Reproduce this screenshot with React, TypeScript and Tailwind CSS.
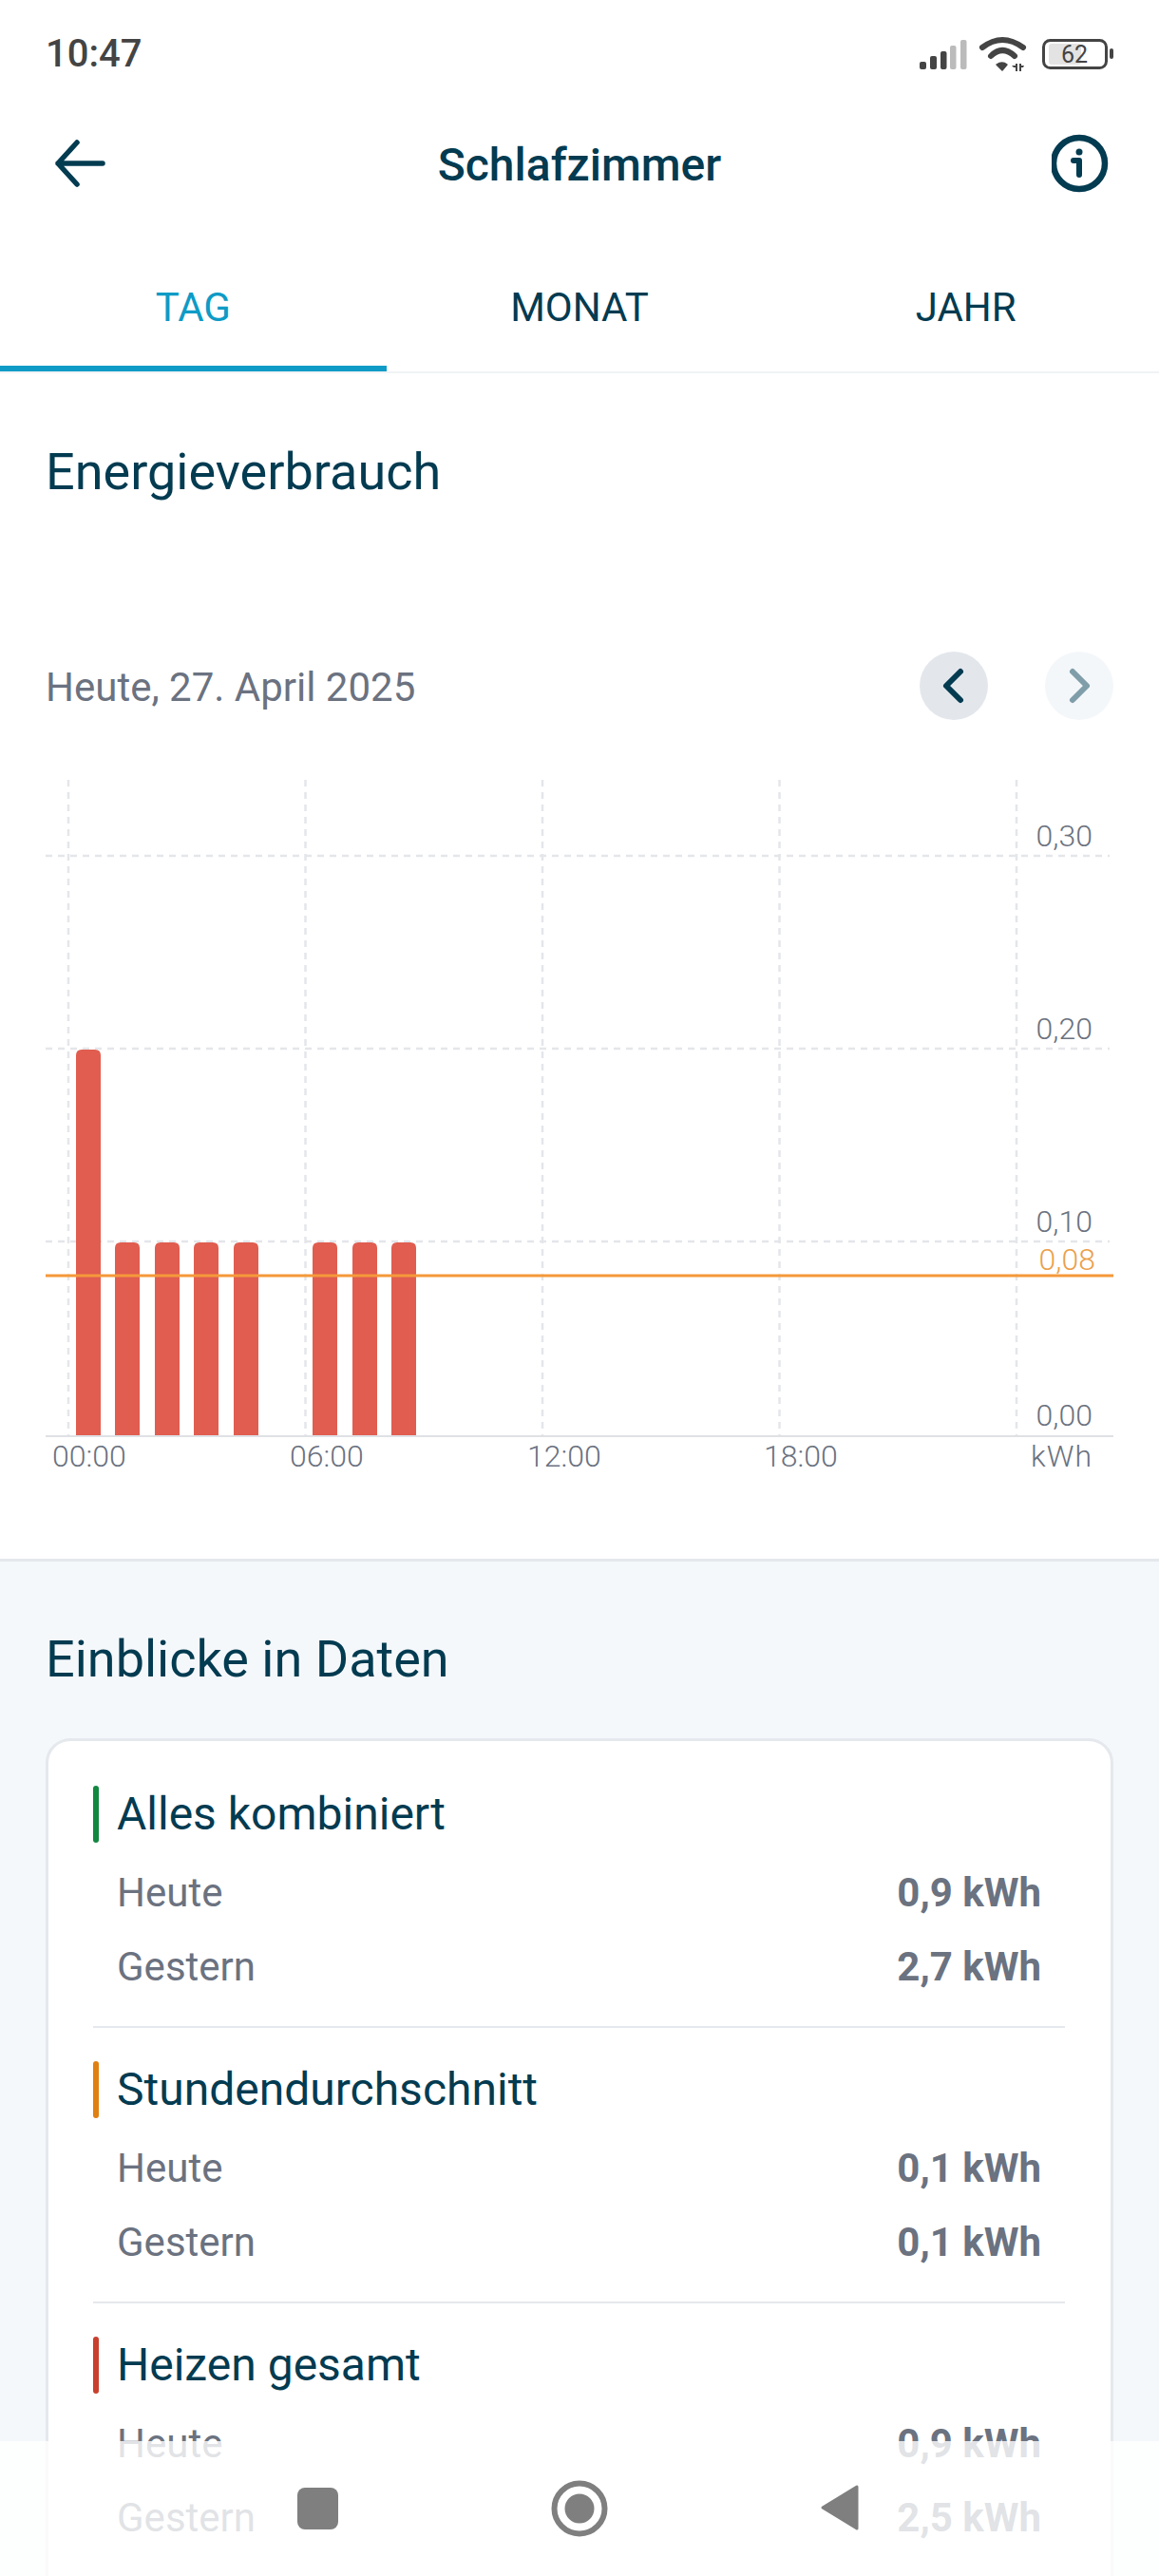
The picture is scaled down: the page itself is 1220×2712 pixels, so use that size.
const DARK = "#033b51";

const bars = [
  { x: 80, value: 0.2 },
  { x: 121, value: 0.1 },
  { x: 163, value: 0.1 },
  { x: 204, value: 0.1 },
  { x: 246, value: 0.1 },
  { x: 329, value: 0.1 },
  { x: 371, value: 0.1 },
  { x: 412, value: 0.1 },
];

const insights = [
  { title: "Alles kombiniert", bar: "bg-[#12873f]", today: "0,9 kWh", yesterday: "2,7 kWh" },
  { title: "Stundendurchschnitt", bar: "bg-[#e07f12]", today: "0,1 kWh", yesterday: "0,1 kWh" },
  { title: "Heizen gesamt", bar: "bg-[#c9402f]", today: "0,9 kWh", yesterday: "2,5 kWh" },
];

function StatusIcons() {
  return (
    <svg width="220" height="50" viewBox="960 30 220 50" className="block">
      <rect x="968" y="63" width="7" height="8" rx="2" fill="#444" />
      <rect x="979" y="57" width="7" height="14" rx="2" fill="#444" />
      <rect x="990" y="52" width="6.5" height="19" rx="2" fill="#444" />
      <rect x="1000" y="46" width="6.5" height="25" rx="2" fill="#bbb" />
      <rect x="1011" y="40" width="6.5" height="31" rx="2" fill="#bbb" />
      <g fill="none" stroke="#444" strokeWidth="6" strokeLinecap="round">
        <path d="M1034 48 Q1055 32 1077 48" />
        <path d="M1043 57 Q1055 45 1068 57" />
      </g>
      <path d="M1049 66 Q1055 62 1060 66 L1055 72 Z" fill="#444" stroke="#444" strokeWidth="1.5" strokeLinejoin="round" />
      <path d="M1065 67 h4 v-2 h2 v8 h-2 v-4 h-2 z M1073 65 h2 v2 h3 l-1 2 h-2 v4 h-2 z" fill="#444" />
      <rect x="1098.5" y="40.5" width="66" height="29" rx="7" fill="none" stroke="#444" strokeWidth="3" />
      <rect x="1104" y="44" width="34" height="22" rx="3" fill="#e3e3e3" />
      <rect x="1168" y="49" width="4" height="11" rx="2" fill="#444" />
      <text x="1131" y="64" textAnchor="middle" fontSize="25" fill="#444" fontFamily="Roboto, sans-serif">62</text>
    </svg>
  );
}

function EnergyChart() {
  const verticals = [72, 321.5, 571, 820.5, 1070];
  const horizontals = [
    { y: 101, label: "0,30" },
    { y: 304, label: "0,20" },
    { y: 507, label: "0,10" },
  ];
  const hours = [
    { x: 55, label: "00:00" },
    { x: 305, label: "06:00" },
    { x: 555, label: "12:00" },
    { x: 804, label: "18:00" },
  ];
  const base = 711;
  return (
    <svg width="1220" height="760" viewBox="0 0 1220 760" className="block" fontFamily="Roboto, sans-serif">
      {verticals.map((x) => (
        <line key={x} x1={x} x2={x} y1="21" y2={base} stroke="#e4e6ea" strokeWidth="2.5" strokeDasharray="7 6" />
      ))}
      {horizontals.map((h) => (
        <g key={h.y}>
          <line x1="48" x2="1168" y1={h.y} y2={h.y} stroke="#e4e6ea" strokeWidth="2.5" strokeDasharray="7 6" />
          <text x="1150" y={h.y - 10} textAnchor="end" fontSize="32" fontWeight="300" fill="#6b7280">
            {h.label}
          </text>
        </g>
      ))}
      {bars.map((b) => {
        const top = base - b.value * 2030;
        return (
          <path
            key={b.x}
            d={`M${b.x} ${base} V${top + 6} Q${b.x} ${top} ${b.x + 6} ${top} H${b.x + 20} Q${b.x + 26} ${top} ${b.x + 26} ${top + 6} V${base} Z`}
            fill="#e05d50"
          />
        );
      })}
      <line x1="48" x2="1172" y1={base + 1} y2={base + 1} stroke="#dfe1e5" strokeWidth="2" />
      <line x1="48" x2="1172" y1="543" y2="543" stroke="#f5993a" strokeWidth="3" />
      <text x="1153" y="537" textAnchor="end" fontSize="32" fontWeight="300" fill="#eb9f4c">
        0,08
      </text>
      <text x="1150" y="701" textAnchor="end" fontSize="32" fontWeight="300" fill="#6b7280">
        0,00
      </text>
      {hours.map((h) => (
        <text key={h.x} x={h.x} y="744" fontSize="32" fontWeight="300" fill="#6b7280">
          {h.label}
        </text>
      ))}
      <text x="1150" y="744" textAnchor="end" fontSize="32" fontWeight="300" letterSpacing="1" fill="#6b7280">
        kWh
      </text>
    </svg>
  );
}

function InsightBlock({ item, last }: { item: (typeof insights)[number]; last: boolean }) {
  return (
    <div className={last ? "" : "border-b-2 border-[#e5e8ec] pb-[24px] mb-[35px]"}>
      <div className="flex items-center h-[60px]">
        <div className={`w-[6px] h-[60px] rounded-full ${item.bar}`} />
        <span className="ml-[19px] text-[48px] text-[#033b51]">{item.title}</span>
      </div>
      <div className="mt-[13px] pl-[25px] pr-[25px] text-[42px] text-[#6b7280]">
        <div className="flex items-center justify-between h-[78px]">
          <span>Heute</span>
          <span className="font-bold">{item.today}</span>
        </div>
        <div className="flex items-center justify-between h-[78px]">
          <span>Gestern</span>
          <span className="font-bold">{item.yesterday}</span>
        </div>
      </div>
    </div>
  );
}

export default function App() {
  return (
    <div className="relative w-[1220px] h-[2712px] overflow-hidden bg-white font-['Roboto',sans-serif]">
      {/* status bar */}
      <div className="flex items-center justify-between h-[114px] pl-[48px] pr-[40px]">
        <span className="text-[40px] font-medium text-[#444]">10:47</span>
        <StatusIcons />
      </div>

      {/* header */}
      <div className="flex items-center justify-between h-[116px] px-[49px]">
        <svg width="64" height="60" viewBox="3 0 64 60" fill="none" stroke={DARK} strokeWidth="5.5" strokeLinecap="round" strokeLinejoin="round">
          <path d="M15 30H62M35 8L15 30L35 52" />
        </svg>
        <span className="mt-[3px] text-[48px] font-medium text-[#033b51]">Schlafzimmer</span>
        <svg width="64" height="64" viewBox="3 0 64 64" fill="none">
          <circle cx="32" cy="32" r="27" stroke={DARK} strokeWidth="6.5" />
          <circle cx="32" cy="20" r="3.5" fill={DARK} />
          <path d="M26 29H32V44" stroke={DARK} strokeWidth="6" strokeLinecap="round" strokeLinejoin="round" />
        </svg>
      </div>

      {/* tabs */}
      <div className="flex pt-[25px] border-b-2 border-[#f1f3f5]">
        <div className="flex-1 h-[136px] pt-[6px] flex items-center justify-center text-[42px] text-[#0e9bc6] border-b-[6px] border-[#0e9bc6]">
          TAG
        </div>
        <div className="flex-1 h-[136px] flex items-center justify-center text-[42px] text-[#033b51]">
          MONAT
        </div>
        <div className="flex-1 h-[136px] flex items-center justify-center text-[42px] text-[#033b51]">
          JAHR
        </div>
      </div>

      {/* energy */}
      <div>
        <div className="pl-[48px] pt-[72px] h-[293px] text-[54px] leading-[64px] text-[#033b51]">Energieverbrauch</div>
        <div className="flex items-center justify-between h-[72px] pl-[48px] pr-[48px]">
          <span className="pt-[2px] text-[42px] text-[#6b7280]">Heute, 27. April 2025</span>
          <div className="flex gap-[60px]">
            <div className="flex items-center justify-center w-[72px] h-[72px] rounded-full bg-[#e3e7ec]">
              <svg width="36" height="44" viewBox="0 0 36 44" fill="none" stroke={DARK} strokeWidth="6" strokeLinecap="round" strokeLinejoin="round">
                <path d="M25 7L10 22L25 37" />
              </svg>
            </div>
            <div className="flex items-center justify-center w-[72px] h-[72px] rounded-full bg-[#f4f7fa]">
              <svg width="36" height="44" viewBox="0 0 36 44" fill="none" stroke="#7f9ea9" strokeWidth="6" strokeLinecap="round" strokeLinejoin="round">
                <path d="M11 7L26 22L11 37" />
              </svg>
            </div>
          </div>
        </div>
        <div className="mt-[42px] h-[844px] border-b-[3px] border-[#e5e8ec]">
          <EnergyChart />
        </div>
      </div>

      {/* insights */}
      <div className="h-[1100px] bg-[#f5f8fb] px-[48px] pt-[71px]">
        <div className="text-[54px] leading-[64px] text-[#033b51]">Einblicke in Daten</div>
        <div className="mt-[51px] rounded-[26px] border-[3px] border-[#e5e8ec] bg-white pt-[47px] pb-[47px] pl-[47px] pr-[48px]">
          {insights.map((item, i) => (
            <InsightBlock key={item.title} item={item} last={i === insights.length - 1} />
          ))}
        </div>
      </div>

      {/* android navigation bar */}
      <div className="absolute left-0 right-0 bottom-0 h-[142px] bg-white/80">
        <div className="absolute left-[313px] top-[49px] w-[43px] h-[44px] rounded-[8px] bg-[#7f7f7f]" />
        <svg className="absolute left-[580px] top-[41px]" width="60" height="60" viewBox="0 0 60 60">
          <circle cx="30" cy="30" r="26.5" fill="none" stroke="#7f7f7f" strokeWidth="6" />
          <circle cx="30" cy="30" r="15.5" fill="#7f7f7f" />
        </svg>
        <svg className="absolute left-[861px] top-[45px]" width="44" height="50" viewBox="0 0 44 50">
          <path d="M41 3V47L5 25Z" fill="#7f7f7f" stroke="#7f7f7f" strokeWidth="3" strokeLinejoin="round" />
        </svg>
      </div>
    </div>
  );
}
